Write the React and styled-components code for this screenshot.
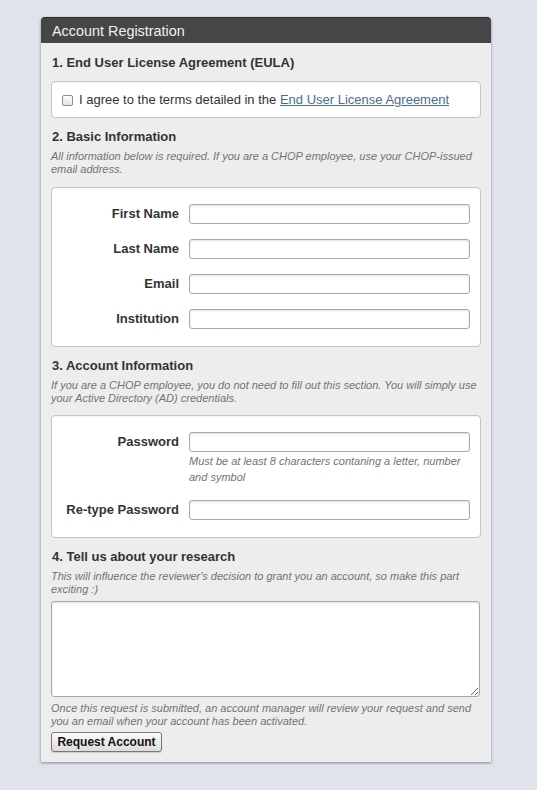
import { Fragment } from "react";
import styled, { createGlobalStyle } from "styled-components";

const GlobalStyle = createGlobalStyle`
  html, body {
    margin: 0;
    padding: 0;
  }
  body {
    min-height: 790px;
    background-color: #dee2e9;
    background-image: repeating-linear-gradient(
      0deg,
      rgba(255, 255, 255, 0.14) 0px,
      rgba(255, 255, 255, 0.14) 1px,
      transparent 1px,
      transparent 3px
    );
    font-family: "Liberation Sans", Arial, sans-serif;
    color: #333;
  }
`;

const Page = styled.div`
  padding: 17px 0 28px 41px;
`;

const Panel = styled.div`
  width: 450px;
  background: #ededed;
  border-radius: 4px 4px 0 0;
  box-shadow: 0 1px 3px rgba(0, 0, 0, 0.4);
`;

const Header = styled.div`
  height: 26px;
  line-height: 26px;
  padding-left: 11px;
  background: #464646;
  border-top: 1px solid #2c2c2c;
  box-sizing: border-box;
  border-radius: 4px 4px 0 0;
  color: #f0f0f0;
  font-size: 14.4px;
`;

const Body = styled.div`
  padding: 0 10px 10px;
`;

const Title = styled.h3`
  margin: ${(p) => (p.$first ? "11px" : "10px")} 0 0 1px;
  font-size: 13px;
  line-height: 18px;
  font-weight: bold;
  color: #333;
`;

const Help = styled.p`
  margin: ${(p) => p.$top || "4px"} 0 0 0;
  font-size: 11px;
  line-height: 13px;
  font-style: italic;
  color: #737373;
`;

const Well = styled.div`
  margin-top: ${(p) => p.$top || "10px"};
  background: #fff;
  border: 1px solid #c4c4c4;
  border-radius: 4px;
  box-shadow: inset 0 1px 1px rgba(0, 0, 0, 0.04);
`;

const EulaWell = styled(Well)`
  padding: 9px 10px 8px 10px;
  display: flex;
  align-items: center;
  gap: 6px;
  font-size: 13px;
  line-height: 18px;
  color: #333;
`;

const Check = styled.input`
  appearance: none;
  margin: 1px 0 0 0;
  width: 11px;
  height: 11px;
  border: 1px solid #8a8a8a;
  border-radius: 2px;
  background: linear-gradient(#fdfdfd, #e4e4e4);
  box-sizing: border-box;
`;

const Link = styled.a`
  color: #4b6b90;
  text-decoration: underline;
`;

const FormWell = styled(Well)`
  padding: 16px 10px 17px 0;
  display: grid;
  grid-template-columns: 127px 281px;
  column-gap: 10px;
  row-gap: 15px;
  align-items: start;
`;

const Label = styled.label`
  text-align: right;
  font-size: 13px;
  font-weight: bold;
  line-height: 20px;
  color: #333;
`;

const Field = styled.div`
  display: flex;
  flex-direction: column;
`;

const TextInput = styled.input`
  box-sizing: border-box;
  width: 281px;
  height: 20px;
  margin: 0;
  border: 1px solid #a9a9a9;
  border-radius: 3px;
  background: #fff;
  box-shadow: inset 0 1px 2px rgba(0, 0, 0, 0.12);
  font-family: inherit;
`;

const FieldHint = styled.span`
  margin-top: 1px;
  font-size: 11px;
  line-height: 16px;
  font-style: italic;
  color: #737373;
`;

const Research = styled.textarea`
  display: block;
  box-sizing: border-box;
  width: 429px;
  height: 96px;
  margin: 5px 0 0 0;
  border: 1px solid #a9a9a9;
  border-radius: 3px;
  background: #fff;
  box-shadow: inset 0 1px 2px rgba(0, 0, 0, 0.12);
  resize: both;
  font-family: inherit;
`;

const Button = styled.button`
  margin-top: 4px;
  height: 20px;
  width: 111px;
  padding: 0;
  border: 1px solid #777;
  border-radius: 3px;
  background: linear-gradient(#fbfbfb, #dcdcdc);
  box-shadow: 0 1px 1px rgba(0, 0, 0, 0.15);
  font-family: "Liberation Sans", Arial, sans-serif;
  font-size: 12px;
  font-weight: bold;
  color: #111;
`;

const basicFields = ["First Name", "Last Name", "Email", "Institution"];

export default function App() {
  return (
    <>
      <GlobalStyle />
      <Page>
        <Panel>
          <Header>Account Registration</Header>
          <Body>
            <Title $first>1. End User License Agreement (EULA)</Title>
            <EulaWell $top="9px">
              <Check type="checkbox" />
              <span>
                I agree to the terms detailed in the{" "}
                <Link href="#">End User License Agreement</Link>
              </span>
            </EulaWell>

            <Title>2. Basic Information</Title>
            <Help>
              All information below is required. If you are a CHOP employee, use your
              CHOP-issued email address.
            </Help>
            <FormWell $top="11px">
              {basicFields.map((name) => (
                <Fragment key={name}>
                  <Label>{name}</Label>
                  <TextInput type="text" />
                </Fragment>
              ))}
            </FormWell>

            <Title>3. Account Information</Title>
            <Help>
              If you are a CHOP employee, you do not need to fill out this section. You
              will simply use your Active Directory (AD) credentials.
            </Help>
            <FormWell $top="10px">
              <Label>Password</Label>
              <Field>
                <TextInput type="password" />
                <FieldHint>
                  Must be at least 8 characters contaning a letter, number and symbol
                </FieldHint>
              </Field>
              <Label>Re-type Password</Label>
              <TextInput type="password" />
            </FormWell>

            <Title>4. Tell us about your research</Title>
            <Help>
              This will influence the reviewer's decision to grant you an account, so
              make this part exciting :)
            </Help>
            <Research />
            <Help $top="5px">
              Once this request is submitted, an account manager will review your
              request and send you an email when your account has been activated.
            </Help>
            <Button>Request Account</Button>
          </Body>
        </Panel>
      </Page>
    </>
  );
}
